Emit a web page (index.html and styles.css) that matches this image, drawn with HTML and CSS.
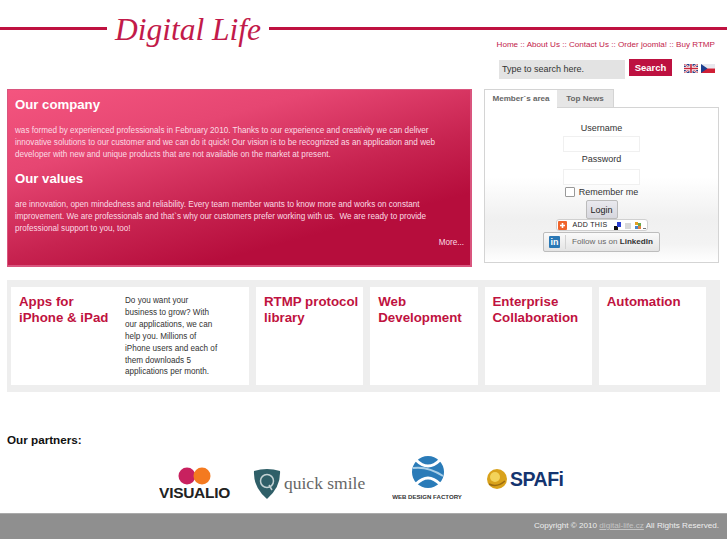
FILE: index.html
```html
<!DOCTYPE html>
<html lang="en">
<head>
<meta charset="utf-8">
<title>Digital Life</title>
<link rel="stylesheet" href="styles.css">
</head>
<body>
<header class="masthead">
  <div class="brand">
    <span class="rule rule-left"></span>
    <span class="logo">Digital Life</span>
    <span class="rule rule-right"></span>
  </div>
  <nav class="topnav">Home :: About Us :: Contact Us :: Order joomla! :: Buy RTMP</nav>
  <div class="searchrow">
    <div class="searchbox">Type to search here.</div>
    <div class="searchbtn">Search</div>
    <div class="flags">
      <svg class="flag" viewBox="0 0 14 9" width="14" height="9">
        <rect width="14" height="9" fill="#2b3f86"/>
        <path d="M0 0L14 9M14 0L0 9" stroke="#fff" stroke-width="2"/>
        <path d="M0 0L14 9M14 0L0 9" stroke="#c8283c" stroke-width=".8"/>
        <path d="M7 0V9M0 4.500H14" stroke="#fff" stroke-width="3"/>
        <path d="M7 0V9M0 4.500H14" stroke="#c8283c" stroke-width="1.600"/>
      </svg>
      <svg class="flag" viewBox="0 0 14 9" width="14" height="9">
        <rect width="14" height="4.500" fill="#e8e8ee"/>
        <rect y="4.500" width="14" height="4.500" fill="#cf1f35"/>
        <path d="M0 0L6.500 4.500L0 9Z" fill="#1c3f8f"/>
      </svg>
    </div>
  </div>
</header>

<main class="toprow">
  <section class="hero">
    <h2>Our company</h2>
    <p>was formed by experienced professionals in February 2010. Thanks to our experience and creativity we can deliver innovative solutions to our customer and we can do it quick! Our vision is to be recognized as an application and web developer with new and unique products that are not available on the market at present.</p>
    <h2>Our values</h2>
    <p>are innovation, open mindedness and reliability. Every team member wants to know more and works on constant improvement. We are professionals and that`s why our customers prefer working with us.&nbsp; We are ready to provide professional support to you, too!</p>
    <div class="more">More...</div>
  </section>

  <aside class="side">
    <div class="tabs">
      <div class="tab tab-on">Member`s area</div>
      <div class="tab">Top News</div>
    </div>
    <div class="panel">
      <div class="field-label">Username</div>
      <div class="field"></div>
      <div class="field-label">Password</div>
      <div class="field"></div>
      <div class="remember"><span class="check"></span><span>Remember me</span></div>
      <div class="login">Login</div>
      <div class="addthis">
        <svg width="9" height="9" viewBox="0 0 9 9"><rect width="9" height="9" rx="1" fill="#f0642c"/><path d="M4.500 2V7M2 4.500H7" stroke="#fff" stroke-width="1.600"/></svg>
        <span class="addthis-text">ADD THIS</span>
        <svg width="32" height="9" viewBox="0 0 32 9">
          <rect x="0" y="5" width="4" height="4" fill="#111"/><rect x="3" y="1" width="4" height="5" fill="#2a3fd0"/>
          <rect x="11" y="2" width="6" height="6" fill="#d8d8d8"/>
          <rect x="21" y="1" width="3" height="3" fill="#e4a020"/><rect x="24" y="2" width="3" height="3" fill="#6aa84a"/><rect x="21" y="5" width="3" height="3" fill="#4a86c8"/><rect x="24" y="5" width="3" height="3" fill="#e08040"/>
          <rect x="29" y="7" width="3" height="1" fill="#777"/>
        </svg>
      </div>
      <div class="linkedin">
        <span class="in-badge">in</span>
        <span class="in-text">Follow us on <b>LinkedIn</b></span>
      </div>
    </div>
  </aside>
</main>

<section class="strip">
  <article class="card card-wide">
    <h3>Apps for iPhone &amp; iPad</h3>
    <p>Do you want your business to grow? With our applications, we can help you. Millions of iPhone users and each of them downloads 5 applications per month.</p>
  </article>
  <article class="card"><h3>RTMP protocol library</h3></article>
  <article class="card"><h3>Web Development</h3></article>
  <article class="card"><h3>Enterprise Collaboration</h3></article>
  <article class="card"><h3>Automation</h3></article>
</section>

<section class="partners">
  <h4>Our partners:</h4>
  <div class="logos">
    <svg class="plogo" width="72" height="34" viewBox="0 0 72 34">
      <circle cx="28" cy="9" r="8.500" fill="#c8215f"/>
      <circle cx="43" cy="9" r="8.500" fill="#f47a20"/>
      <text x="35.500" y="31" text-anchor="middle" class="t-visualio">VISUALIO</text>
    </svg>
    <svg class="plogo" width="114" height="32" viewBox="0 0 114 32">
      <path d="M1 3Q14 -1 27 3Q28 19 14 31Q0 19 1 3Z" fill="#2f5f68"/>
      <circle cx="14" cy="13" r="6.500" fill="none" stroke="#c4d2d4" stroke-width="1.500"/>
      <path d="M16 17L19 22" stroke="#c4d2d4" stroke-width="1.500"/>
      <text x="31" y="21" class="t-quick">quick smile</text>
    </svg>
    <svg class="plogo" width="72" height="46" viewBox="0 0 72 46">
      <circle cx="36" cy="17" r="16" fill="#2a7bb8"/>
      <path d="M24 5Q36 17 48 5M24 29Q36 17 48 29" fill="none" stroke="#fff" stroke-width="3"/>
      <path d="M21 13Q36 11 51 21" fill="none" stroke="#a9cfe8" stroke-width="2"/>
      <text x="35" y="44" text-anchor="middle" class="t-wdf">WEB DESIGN FACTORY</text>
    </svg>
    <svg class="plogo" width="80" height="26" viewBox="0 0 80 26">
      <circle cx="10" cy="13" r="10" fill="#d9a21b"/>
      <circle cx="8" cy="11" r="5" fill="#f3d35a"/>
      <path d="M2 18Q10 22 18 15" fill="none" stroke="#9c6c10" stroke-width="1.500"/>
      <text x="23" y="20" class="t-spafi">SPAFi</text>
    </svg>
  </div>
</section>

<footer class="foot">
  <span>Copyright © 2010 <a class="foot-link">digital-life.cz</a> All Rights Reserved.</span>
</footer>
</body>
</html>
```

FILE: styles.css
```css
* { box-sizing: border-box; }

html, body { margin: 0; padding: 0; }

body {
  background: #fff;
  font-family: "Liberation Sans", Arial, sans-serif;
  color: #333;
  font-size: 9px;
}

.masthead { display: flex; flex-direction: column; }

.brand {
  display: flex;
  align-items: center;
  height: 40px;
  padding-top: 20px;
}

.rule { height: 3px; background: #bf1240; display: block; margin-top: -4px; }
.rule-left { width: 107px; }
.rule-right { flex: 1; }

.logo {
  width: 162px;
  text-align: center;
  font-family: "Liberation Serif", serif;
  font-style: italic;
  font-size: 31.500px;
  line-height: 40px;
  color: #c21a4a;
  margin-top: 0;
  white-space: nowrap;
}

.topnav {
  padding-right: 12px;
  text-align: right;
  color: #c21a4a;
  font-size: 8.100px;
  line-height: 10px;
}

.searchrow {
  display: flex;
  align-items: flex-start;
  margin-top: 9px;
  padding-left: 499px;
}

.searchbox {
  width: 126px;
  height: 19px;
  margin-top: 1px;
  background: #e3e3e3;
  color: #333;
  font-size: 9px;
  line-height: 19px;
  padding-left: 3px;
}

.searchbtn {
  width: 43px;
  height: 17px;
  margin-left: 4px;
  background: #bd1140;
  color: #fff;
  font-weight: bold;
  font-size: 9.500px;
  line-height: 17px;
  text-align: center;
}

.flags { display: flex; gap: 3px; margin: 5px 0 0 12px; }
.flag { display: block; }

.toprow {
  display: flex;
  align-items: flex-start;
  margin-top: 10px;
  padding-left: 7px;
}

.hero {
  width: 465px;
  height: 178px;
  padding: 7px 7px 0;
  border: 1px solid #d9557e;
  border-width: 1px 2px 2px 1px;
  background: linear-gradient(165deg, #f4557f 0%, #e64672 28%, #c72350 56%, #b60d3c 76%, #b60d3c 100%);
  color: #fff;
}

.hero h2 {
  margin: 0;
  font-size: 13.200px;
  line-height: 16px;
  font-weight: bold;
  color: #fff;
}

.hero p {
  margin: 12px 0 10px;
  font-size: 8.130px;
  line-height: 12px;
  color: #fbdbe4;
}

.hero .more {
  margin: -8px -1px 0 0;
  text-align: right;
  font-size: 8.130px;
  line-height: 12px;
  color: #fbdbe4;
}

.side { width: 235px; margin-left: 12px; }

.tabs { display: flex; height: 18px; }

.tab {
  width: 57px;
  background: #e6e6e6;
  border: 1px solid #d4d4d4;
  border-bottom: 0;
  border-left: 0;
  color: #666;
  font-size: 8.100px;
  font-weight: bold;
  line-height: 18px;
  text-align: center;
}

.tab-on {
  width: 73px;
  background: #fff;
  border-left: 1px solid #d4d4d4;
  border-right: 0;
  position: relative;
  z-index: 1;
  height: 19px;
}

.panel {
  height: 156px;
  border: 1px solid #d4d4d4;
  background: linear-gradient(180deg, #fff 0%, #fff 45%, #f0f0f0 72%, #f3f3f3 88%, #fff 100%);
  display: flex;
  flex-direction: column;
  align-items: center;
  padding-top: 14px;
}

.field-label {
  font-size: 9px;
  line-height: 12px;
  height: 14px;
  color: #333;
}

.field {
  width: 77px;
  height: 16px;
  background: #fff;
  border: 1px solid #f0f0f0;
  margin-bottom: 1px;
}

.field + .field-label { height: 13px; margin-bottom: 3px; }

.remember {
  display: flex;
  align-items: center;
  gap: 4px;
  height: 12px;
  font-size: 9px;
}

.check {
  width: 10px;
  height: 10px;
  border: 1px solid #999;
  border-radius: 1px;
  background: #fff;
}

.login {
  width: 32px;
  height: 19px;
  margin-top: 2px;
  background: linear-gradient(#e9e9ee, #d7d7de);
  border: 1px solid #bbb;
  border-radius: 2px;
  font-size: 9px;
  line-height: 18px;
  text-align: center;
  color: #222;
}

.addthis {
  width: 92px;
  height: 12px;
  display: flex;
  align-items: center;
  gap: 5px;
  padding: 0 1px;
  background: #fff;
  border: 1px solid #d0d0d0;
  border-radius: 3px;
}

.addthis-text {
  flex: 1;
  font-size: 7px;
  letter-spacing: .3px;
  color: #222;
  line-height: 10px;
  white-space: nowrap;
  margin-left: 1px;
}

.linkedin {
  width: 117px;
  height: 20px;
  margin-top: 1px;
  display: flex;
  align-items: center;
  padding-left: 5px;
  background: linear-gradient(#fafafa, #e4e4e4);
  border: 1px solid #bdbdbd;
  border-radius: 2px;
}

.in-badge {
  width: 11px;
  height: 12px;
  background: #2a78b5;
  border-radius: 1px;
  color: #fff;
  font-weight: bold;
  font-size: 9px;
  line-height: 12px;
  text-align: center;
}

.in-text {
  margin-left: 5px;
  padding-left: 6px;
  border-left: 1px solid #d2d2d2;
  font-size: 8.100px;
  line-height: 14px;
  color: #666;
  white-space: nowrap;
}

.in-text b { color: #333; }

.strip {
  display: flex;
  gap: 7px;
  width: 713px;
  height: 112px;
  margin: 13px 0 0 7px;
  padding: 7px 14px 7px 4px;
  background: #eee;
}

.card {
  flex: none;
  width: 107.250px;
  background: #fff;
  padding: 7px 3px 0 8px;
}

.card h3 {
  margin: 0;
  font-size: 13.300px;
  line-height: 16px;
  font-weight: bold;
  color: #bf1240;
}

.card-wide {
  width: 238px;
  display: flex;
  padding-right: 28px;
}

.card-wide h3 { width: 92px; margin-right: 14px; flex: none; }

.card-wide p {
  margin: 1px 0 0;
  font-size: 8.130px;
  line-height: 11.900px;
  color: #333;
}

.partners { padding-left: 7px; margin-top: 41px; }

.partners h4 {
  margin: 0;
  font-size: 11.700px;
  line-height: 14px;
  font-weight: bold;
  color: #111;
}

.logos {
  display: flex;
  align-items: flex-end;
  height: 51px;
  margin-top: 3px;
  padding-left: 152px;
}

.plogo { display: block; flex: none; }
.logos .plogo:nth-child(2) { margin-left: 22px; margin-bottom: 1px; }
.logos .plogo:nth-child(3) { margin-left: 25px; }
.logos .plogo:nth-child(4) { margin-left: 23px; margin-bottom: 9px; }

.t-visualio { font: bold 15.500px "Liberation Sans", sans-serif; fill: #222; letter-spacing: -.3px; }
.t-quick { font: 17.500px "Liberation Serif", serif; fill: #666; }
.t-wdf { font: bold 6.100px "Liberation Sans", sans-serif; fill: #333; }
.t-spafi { font: bold 19.500px "Liberation Sans", sans-serif; fill: #14346f; letter-spacing: -.5px; }

.foot {
  height: 26px;
  margin-top: 12px;
  padding: 0 8px 0 0;
  background: #8f8f8f;
  border-top: 1px solid #aaa;
  color: #eee;
  font-size: 8.100px;
  line-height: 23px;
  text-align: right;
}

.foot-link { text-decoration: underline; color: #c4c4c4; }
```
